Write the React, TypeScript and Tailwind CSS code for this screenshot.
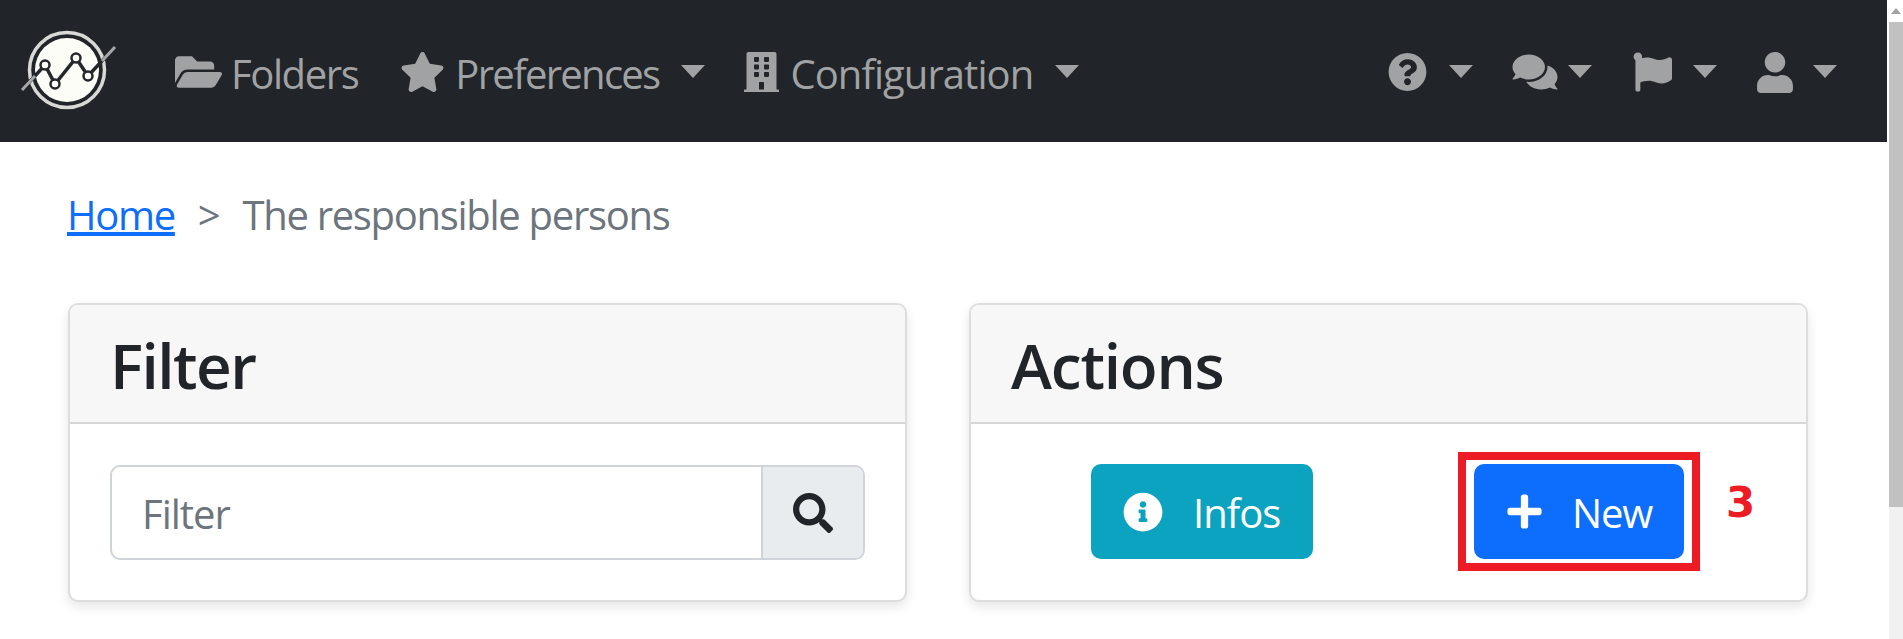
import { FaFolderOpen, FaStar, FaBuilding, FaQuestionCircle, FaComments, FaFlag, FaUser, FaSearch, FaInfoCircle, FaPlus } from 'react-icons/fa';

const Caret = () => (
  <svg viewBox="0 0 24 13" className="w-[24px] h-[13px] shrink-0 fill-[#a0a2a4]">
    <path d="M0 0h24L12 13z" />
  </svg>
);

const Logo = () => (
  <svg viewBox="18 28 100 90" className="w-[100px] h-[90px] shrink-0">
    <circle cx="67" cy="72" r="37.5" fill="none" stroke="#d9d9d7" strokeWidth="3.5" />
    <circle cx="67" cy="72" r="32" fill="#fdfdf8" />
    <path d="M22 92L45 67L55 86L76 60L88 78L115 49" fill="none" stroke="#24272b" strokeWidth="3.5" />
    <path d="M22 92L35 78M102 63L115 49" fill="none" stroke="#a5a7a8" strokeWidth="3" />
    <circle cx="45" cy="67" r="4.5" fill="#fdfdf8" stroke="#24272b" strokeWidth="2.5" />
    <circle cx="55" cy="86" r="4.5" fill="#fdfdf8" stroke="#24272b" strokeWidth="2.5" />
    <circle cx="76" cy="60" r="4.5" fill="#fdfdf8" stroke="#24272b" strokeWidth="2.5" />
    <circle cx="88" cy="78" r="4.5" fill="#fdfdf8" stroke="#24272b" strokeWidth="2.5" />
  </svg>
);

export default function App() {
  return (
    <div className="h-[639px] w-full overflow-hidden flex bg-white font-['Open_Sans',sans-serif]">
      <div className="flex-1 min-w-0">
        {/* Navbar */}
        <nav className="h-[142px] bg-[#212529] flex items-center text-[#a0a2a4] text-[40px]">
          <div className="ml-[18px]"><Logo /></div>
          <div className="ml-[57px] flex items-center">
            <FaFolderOpen className="mt-[2px] w-[47px] h-[42px]" />
            <span className="mt-[5px] ml-[9px] tracking-[-1.4px]">Folders</span>
          </div>
          <div className="ml-[42px] flex items-center">
            <FaStar className="mt-[2px] w-[45px] h-[42px]" />
            <span className="mt-[5px] ml-[10px] tracking-[-1.7px]">Preferences</span>
            <div className="ml-[22px]"><Caret /></div>
          </div>
          <div className="ml-[39px] flex items-center">
            <FaBuilding className="mt-[2px] w-[35px] h-[42px]" />
            <span className="mt-[5px] ml-[11px] tracking-[-0.95px]">Configuration</span>
            <div className="ml-[22px]"><Caret /></div>
          </div>
          <div className="ml-auto mr-[50px] flex items-center">
            <FaQuestionCircle className="mt-[2px] w-[39px] h-[40px]" />
            <div className="ml-[22px]"><Caret /></div>
            <FaComments className="mt-[2px] ml-[39px] w-[46px] h-[40px]" />
            <div className="ml-[10px]"><Caret /></div>
            <FaFlag className="mt-[2px] ml-[41px] w-[39px] h-[40px]" />
            <div className="ml-[21px]"><Caret /></div>
            <FaUser className="mt-[2px] ml-[40px] w-[36px] h-[41px]" />
            <div className="ml-[20px]"><Caret /></div>
          </div>
        </nav>

        <main className="pl-[68px] pr-[79px]">
          {/* Breadcrumb */}
          <div className="h-[161px] pt-[49px] text-[40px] leading-[48px] flex items-start tracking-[-1.3px]">
            <a href="#" className="-ml-[1px] text-[#0d6efd] underline">Home</a>
            <span className="ml-[23px] text-[#6c757d]">&gt;</span>
            <span className="ml-[23px] text-[#6c757d]">The responsible persons</span>
          </div>

          <div className="grid grid-cols-2 gap-[62px]">
            {/* Filter card */}
            <div className="h-[299px] bg-white border-2 border-[#dcdddd] rounded-[10px] shadow-[0_5px_12px_rgba(0,0,0,0.1)] overflow-hidden">
              <div className="h-[119px] bg-[#f7f7f7] border-b-2 border-[#d6d7d8] pl-[40px] pt-[3px] flex items-center">
                <h3 className="text-[62px] font-semibold text-[#212529] leading-none tracking-[-1.5px]">Filter</h3>
              </div>
              <div className="px-[40px] pt-[41px]">
                <div className="h-[95px] flex border-2 border-[#ced4da] rounded-[10px] overflow-hidden">
                  <div className="flex-1 pl-[30px] pt-[2px] flex items-center text-[40px] text-[#6c757d] tracking-[-1px]">Filter</div>
                  <div className="w-[102px] bg-[#e9ecef] border-l-2 border-[#ced4da] flex items-center justify-center">
                    <FaSearch className="w-[40px] h-[40px] text-[#212529]" />
                  </div>
                </div>
              </div>
            </div>

            {/* Actions card */}
            <div className="h-[299px] bg-white border-2 border-[#dcdddd] rounded-[10px] shadow-[0_5px_12px_rgba(0,0,0,0.1)] overflow-hidden">
              <div className="h-[119px] bg-[#f7f7f7] border-b-2 border-[#d6d7d8] pl-[40px] pt-[3px] flex items-center">
                <h3 className="text-[62px] font-semibold text-[#212529] leading-none tracking-[-1.2px]">Actions</h3>
              </div>
              <div className="pl-[120px] pt-[28px] flex items-center">
                <button className="w-[222px] h-[95px] bg-[#0ca3c1] rounded-[10px] text-white text-[40px] flex items-center pl-[32px] tracking-[-1px]">
                  <FaInfoCircle className="w-[40px] h-[40px]" />
                  <span className="mt-[2px] ml-[30px]">Infos</span>
                </button>
                <div className="relative ml-[145px]">
                  <div className="border-[8px] border-[#ed1c24] px-[8px] py-[4px]">
                    <button className="w-[210px] h-[95px] bg-[#0d6efd] rounded-[10px] text-white text-[40px] flex items-center pl-[31px] tracking-[-1.2px]">
                      <FaPlus className="w-[39px] h-[39px]" />
                      <span className="mt-[2px] ml-[28px]">New</span>
                    </button>
                  </div>
                  <span className="absolute left-[268px] top-[27px] text-[42px] leading-[48px] font-bold text-[#ed1c24] font-['DejaVu_Sans',sans-serif]">3</span>
                </div>
              </div>
            </div>
          </div>
        </main>
      </div>

      {/* Scrollbar */}
      <div className="w-[16px] shrink-0 bg-white">
        <div className="h-full ml-[2px] flex flex-col bg-[#f1f1f1]">
          <div className="h-[22px] bg-white flex items-center justify-center">
            <svg viewBox="0 0 10 6" className="w-[10px] h-[6px] fill-[#a3a3a3]"><path d="M5 0l5 6H0z" /></svg>
          </div>
          <div className="h-[485px] bg-[#c1c1c1]"></div>
        </div>
      </div>
    </div>
  );
}
